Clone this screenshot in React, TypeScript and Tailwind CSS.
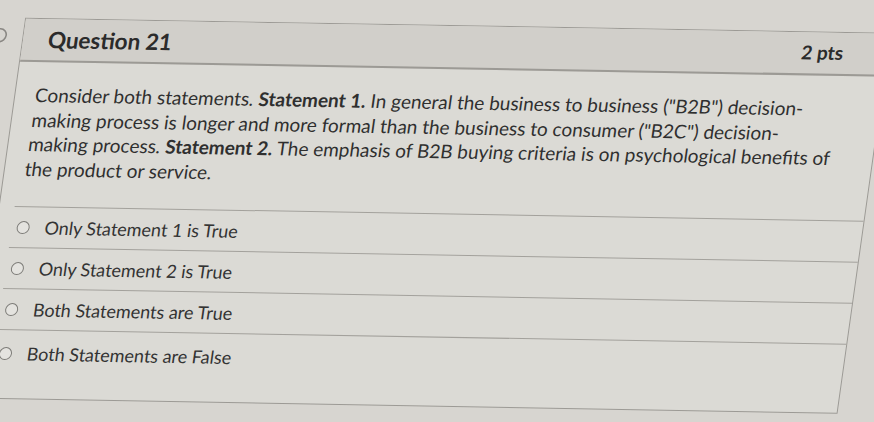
const ANSWERS = [
  "Only Statement 1 is True",
  "Only Statement 2 is True",
  "Both Statements are True",
  "Both Statements are False",
];

function Radio() {
  return (
    <span className="inline-block w-[13px] h-[13px] shrink-0 rounded-full border-[1.5px] border-[#7d7c78] bg-[#e4e3df]" />
  );
}

export default function App() {
  return (
    <div
      className="w-[874px] h-[422px] overflow-hidden bg-[#d7d5d0] text-[#2e2e2e]"
      style={{ fontFamily: "Lato, 'Open Sans', sans-serif" }}
    >
      {/* the photo leans: skew the whole sheet */}
      <div className="ml-[-33px] w-[907px] h-[422px] pt-[25px] flex -skew-x-[8deg] skew-y-1">
        {/* flag icon gutter */}
        <div className="w-[31px] shrink-0 pt-[10px]">
          <svg width="12" height="16" viewBox="0 0 12 16" className="ml-[4px]">
            <path
              d="M0 1.5 H4 A6.5 6.5 0 0 1 4 14.5 H0"
              fill="none"
              stroke="#8a8884"
              strokeWidth="1.6"
            />
          </svg>
        </div>

        {/* question card */}
        <div className="w-[868px] h-[381px] shrink-0 flex flex-col border border-[#9c9a95] bg-[#dbdad5]">
          <div className="h-[43px] shrink-0 flex items-center justify-between pl-[25px] pr-[44px] bg-[#d1cfca] border-b-2 border-[#9c9a95]">
            <h2 className="text-[22.5px] font-bold text-[#2b2b2b]">Question 21</h2>
            <span className="text-[19px] font-bold text-[#2b2b2b]">2 pts</span>
          </div>

          <div className="pt-[21px] pl-[20px] pr-[10px] text-[19px] leading-[24.5px] text-[#2f2f2f] whitespace-nowrap">
            Consider both statements. <span className="font-bold">Statement 1.</span> In general the
            business to business ("B2B") decision-
            <br />
            making process is longer and more formal than the business to consumer ("B2C") decision-
            <br />
            making process. <span className="font-bold">Statement 2.</span> The emphasis of B2B buying
            criteria is on psychological benefits of
            <br />
            the product or service.
          </div>

          <div className="mt-[25px] ml-[15px] border-t border-[#a3a19c] flex flex-col">
            {ANSWERS.map((a, i) => (
              <label
                key={a}
                className={
                  i < ANSWERS.length - 1
                    ? "h-[41px] flex items-center gap-[15px] pl-[5px] border-b border-[#a3a19c]"
                    : "h-[46px] flex items-center gap-[15px] pl-[5px]"
                }
              >
                <Radio />
                <span className="text-[18px] text-[#333]">{a}</span>
              </label>
            ))}
          </div>
        </div>
      </div>
    </div>
  );
}
